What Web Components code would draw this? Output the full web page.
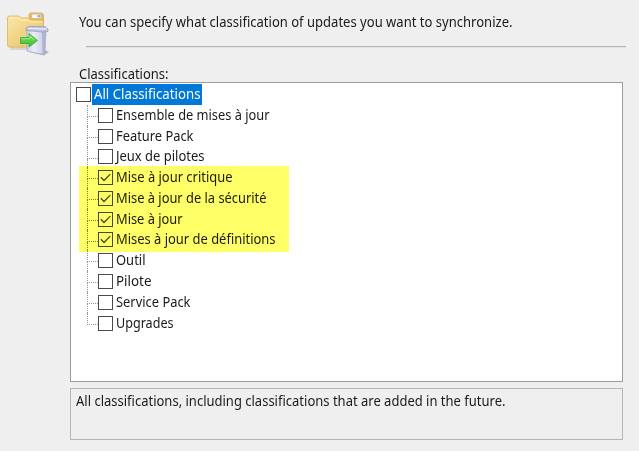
<!DOCTYPE html>
<html lang="en">
<head>
<meta charset="utf-8">
<title>Classifications</title>
<style>
html, body { margin: 0; height: 100%; overflow: hidden; background: #efefef; }
body { font: 14.2px/20px "Noto Sans", "Open Sans", sans-serif; color: #1c1a1c; }
</style>
</head>
<body>
<update-page>
  <folder-icon slot="icon"></folder-icon>
  <fit-text slot="intro" w="433">You can specify what classification of updates you want to synchronize.</fit-text>
  <fit-text slot="label" w="89">Classifications:</fit-text>
  <class-tree slot="tree">
    <tree-row root><fit-text w="106">All Classifications</fit-text></tree-row>
    <tree-row><fit-text w="153">Ensemble de mises à jour</fit-text></tree-row>
    <tree-row><fit-text w="77">Feature Pack</fit-text></tree-row>
    <tree-row><fit-text w="88">Jeux de pilotes</fit-text></tree-row>
    <tree-row checked><fit-text w="116">Mise à jour critique</fit-text></tree-row>
    <tree-row checked><fit-text w="150">Mise à jour de la sécurité</fit-text></tree-row>
    <tree-row checked><fit-text w="66">Mise à jour</fit-text></tree-row>
    <tree-row checked><fit-text w="159">Mises à jour de définitions</fit-text></tree-row>
    <tree-row><fit-text w="29">Outil</fit-text></tree-row>
    <tree-row><fit-text w="35">Pilote</fit-text></tree-row>
    <tree-row><fit-text w="74">Service Pack</fit-text></tree-row>
    <tree-row last><fit-text w="57">Upgrades</fit-text></tree-row>
  </class-tree>
  <fit-text slot="description" w="429">All classifications, including classifications that are added in the future.</fit-text>
</update-page>
<script>
class Base extends HTMLElement {
  constructor() {
    super();
    this.attachShadow({ mode: 'open' }).innerHTML = this.constructor.markup;
  }
}

class FitText extends Base {
  static markup = `<style>
    :host { display: block; white-space: nowrap; }
    span { display: inline-block; vertical-align: top; transform-origin: 0 50%; }
  </style><span><slot></slot></span>`;
  connectedCallback() {
    const span = this.shadowRoot.querySelector('span');
    const target = Number(this.getAttribute('w')) + 0.5;
    const natural = span.getBoundingClientRect().width;
    span.style.transform = `scaleX(${(target / natural).toFixed(4)})`;
    this.style.width = target + 'px';
  }
}

class FolderIcon extends Base {
  static markup = `<style>:host, svg { display: block; width: 46px; height: 48px; }</style>
  <svg viewBox="0 0 46 48">
    <defs>
      <linearGradient id="f" x1="0" y1="0" x2="1" y2="1"><stop stop-color="#fbe6a8"/><stop offset="1" stop-color="#e8bf62"/></linearGradient>
      <linearGradient id="b" x1="0" x2="1"><stop stop-color="#c9cee4"/><stop offset=".35" stop-color="#eceef7"/><stop offset="1" stop-color="#c3c9e0"/></linearGradient>
      <linearGradient id="g" x1="0" y1="0" x2="0" y2="1"><stop stop-color="#7fe862"/><stop offset="1" stop-color="#35bd2c"/></linearGradient>
      <filter id="s" x="-20%" y="-20%" width="140%" height="140%"><feGaussianBlur stdDeviation=".55"/></filter>
    </defs>
    <g filter="url(#s)">
      <path d="M3 38H22V41H5Z" fill="#bdbbb6" opacity=".5"/>
      <path d="M23 6Q23 4 25 4H35Q37.500 4 37.500 7V36H23Z" fill="#e3be69" stroke="#d3ab58" stroke-width=".8"/>
      <rect x="26" y="5.500" width="9" height="3.500" rx="1" fill="#f7fbff"/>
      <path d="M31.500 6h3v2.300h-3z" fill="#7fb2df"/>
      <path d="M1.500 9Q1.500 7 3.500 7H13L15 9H22L25 11H35Q37.500 11 37.500 13V36Q37 38 35 38H3.500Q1.500 38 1.500 36Z" fill="url(#f)" stroke="#dcb45c" stroke-width=".8"/>
      <path d="M3 9H13L15 11H22L25 13H36" fill="none" stroke="#fff0bd"/>
      <path d="M23 43L38 46.500L43 43L39 41Z" fill="#77798b" opacity=".5"/>
      <path d="M21 21H40L39 42L36.500 45.500L21 42Z" fill="url(#b)" stroke="#9ea4c3" stroke-width=".7"/>
      <path d="M36 22L40 21L39 42L36.500 45.500Z" fill="#adb3d0"/>
      <path d="M20 19L23 17.500H39L42 20V22.500L36 23L20 21.500Z" fill="#c1c5e0" stroke="#9296ba" stroke-width=".7"/>
      <path d="M22 19.300L36 20L41 19.700" fill="none" stroke="#f4f5fc"/>
      <path d="M14.500 28.500H23V24.500L31.500 31.500L23 38V34.500H14.500Z" fill="url(#g)" stroke="#36a634" stroke-width=".8" stroke-linejoin="round"/>
      <path d="M15.500 29.700H24V27L28 31" fill="none" stroke="#a9f08f" stroke-width=".8"/>
    </g>
  </svg>`;
}

class CheckBox extends Base {
  static markup = `<style>
    :host { display: block; box-sizing: border-box; width: 15px; height: 15px; border: 1.4px solid #494949; flex: none; }
    svg { display: none; width: 13px; height: 13px; }
    :host([checked]) svg { display: block; }
  </style><svg viewBox="0 0 13 13"><path d="M1.800 6.200L5 9.500L11.300 3.100" fill="none" stroke="#484838" stroke-width="1.300"/></svg>`;
}
customElements.define('check-box', CheckBox);

class TreeRow extends Base {
  static markup = `<style>
    :host { display: flex; align-items: center; height: 20.78px; margin-left: 16px; }
    :host([root]) { margin-left: 5px; height: 21px; }
    .branch { align-self: stretch; width: 11px; flex: none; display: grid; grid-template-rows: 12px 1fr; }
    .up { border-left: 1px dotted #969696; border-bottom: 1px dotted #969696; }
    .down { border-left: 1px dotted #969696; }
    :host([root]) .branch, :host([last]) .down { display: none; }
    .text { margin-left: 3px; padding-bottom: 1px; }
    :host([root]) .text { background: #0078d7; color: #fff; margin-left: 1px; padding: 0 1px 1px 2px; height: 20px; }
    :host([checked]) .branch div { border-color: #85854a; }
  </style>
  <div class="branch"><div class="up"></div><div class="down"></div></div>
  <check-box></check-box><div class="text"><slot></slot></div>`;
  connectedCallback() {
    this.shadowRoot.querySelector('check-box').toggleAttribute('checked', this.hasAttribute('checked'));
  }
}

class ClassTree extends Base {
  static markup = `<style>
    :host { display: block; position: relative; box-sizing: border-box; height: 300px; border: 1px solid #9a9ba4; background: #fff; padding-top: 1px; }
    .marker { position: absolute; left: 8px; top: 83px; width: 210px; height: 86px; background: #ffff67; mix-blend-mode: multiply; }
  </style><slot></slot><div class="marker"></div>`;
}

class UpdatePage extends Base {
  static markup = `<style>
    :host { display: grid; grid-template-columns: 70px 553px 1fr; height: 451px; background: #efefef; }
    .icon { padding: 9px 0 0 6px; }
    main { display: flex; flex-direction: column; padding-top: 12px; }
    .intro { padding-left: 9px; height: 20px; }
    .rule { height: 1px; background: #b4b4b4; border-bottom: 1px solid #e2e2e2; margin: 14px -3px 0 16px; }
    .label { padding-left: 9px; height: 18px; margin-top: 16px; }
    .desc { box-sizing: border-box; height: 52px; margin-top: 6px; border: 1px solid #b5b5b5; padding: 2px 5px; }
  </style>
  <div class="icon"><slot name="icon"></slot></div>
  <main>
    <div class="intro"><slot name="intro"></slot></div>
    <div class="rule"></div>
    <div class="label"><slot name="label"></slot></div>
    <div class="tree"><slot name="tree"></slot></div>
    <div class="desc"><slot name="description"></slot></div>
  </main>`;
}
customElements.define('update-page', UpdatePage);
customElements.define('class-tree', ClassTree);
customElements.define('tree-row', TreeRow);
customElements.define('folder-icon', FolderIcon);
customElements.define('fit-text', FitText);
</script>
</body>
</html>
